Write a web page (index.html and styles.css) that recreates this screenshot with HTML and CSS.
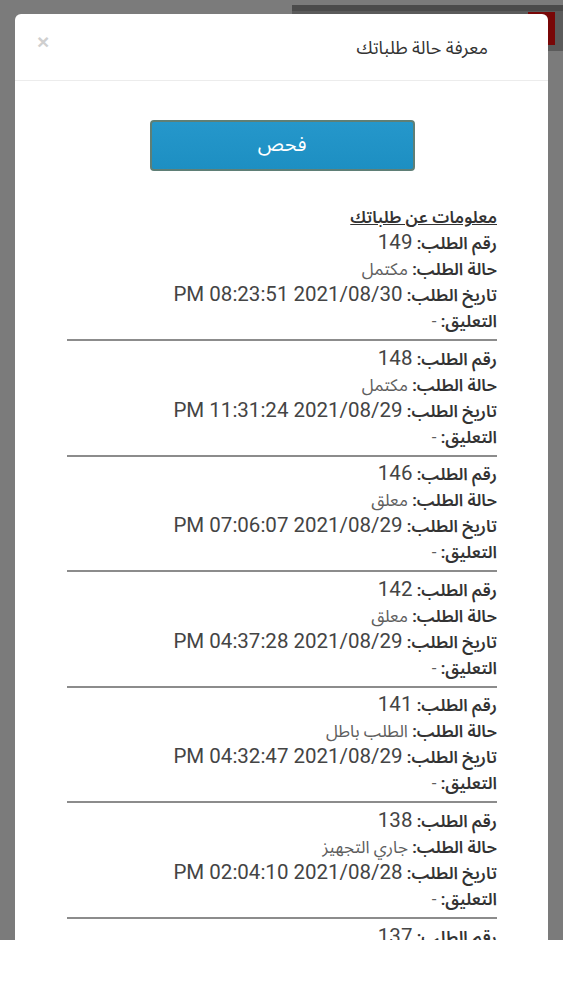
FILE: index.html
```html
<!DOCTYPE html>
<html lang="ar">
<head>
<meta charset="utf-8">
<title>معرفة حالة طلباتك</title>
<link rel="stylesheet" href="styles.css">
</head>
<body>
<div class="screen">
  <div class="bg-bar"></div>
  <div class="bg-red"></div>
  <div class="overlay"></div>
  <div class="modal">
    <div class="modal-header">
      <span class="close">×</span>
      <h4 class="modal-title">معرفة حالة طلباتك</h4>
    </div>
    <div class="modal-body">
      <div class="btn-wrap"><button class="btn">فحص</button></div>
      <div class="info">
        <div class="info-title">معلومات عن طلباتك</div>
        <div class="order">
          <div class="row"><span class="lbl">رقم الطلب:</span> <span class="num">149</span></div>
          <div class="row"><span class="lbl">حالة الطلب:</span> <span class="val">مكتمل</span></div>
          <div class="row"><span class="lbl">تاريخ الطلب:</span> <span class="num">2021/08/30 08:23:51 PM</span></div>
          <div class="row"><span class="lbl">التعليق:</span> <span class="val">-</span></div>
        </div>
        <hr class="sep">
        <div class="order">
          <div class="row"><span class="lbl">رقم الطلب:</span> <span class="num">148</span></div>
          <div class="row"><span class="lbl">حالة الطلب:</span> <span class="val">مكتمل</span></div>
          <div class="row"><span class="lbl">تاريخ الطلب:</span> <span class="num">2021/08/29 11:31:24 PM</span></div>
          <div class="row"><span class="lbl">التعليق:</span> <span class="val">-</span></div>
        </div>
        <hr class="sep">
        <div class="order">
          <div class="row"><span class="lbl">رقم الطلب:</span> <span class="num">146</span></div>
          <div class="row"><span class="lbl">حالة الطلب:</span> <span class="val">معلق</span></div>
          <div class="row"><span class="lbl">تاريخ الطلب:</span> <span class="num">2021/08/29 07:06:07 PM</span></div>
          <div class="row"><span class="lbl">التعليق:</span> <span class="val">-</span></div>
        </div>
        <hr class="sep">
        <div class="order">
          <div class="row"><span class="lbl">رقم الطلب:</span> <span class="num">142</span></div>
          <div class="row"><span class="lbl">حالة الطلب:</span> <span class="val">معلق</span></div>
          <div class="row"><span class="lbl">تاريخ الطلب:</span> <span class="num">2021/08/29 04:37:28 PM</span></div>
          <div class="row"><span class="lbl">التعليق:</span> <span class="val">-</span></div>
        </div>
        <hr class="sep">
        <div class="order">
          <div class="row"><span class="lbl">رقم الطلب:</span> <span class="num">141</span></div>
          <div class="row"><span class="lbl">حالة الطلب:</span> <span class="val">الطلب باطل</span></div>
          <div class="row"><span class="lbl">تاريخ الطلب:</span> <span class="num">2021/08/29 04:32:47 PM</span></div>
          <div class="row"><span class="lbl">التعليق:</span> <span class="val">-</span></div>
        </div>
        <hr class="sep">
        <div class="order">
          <div class="row"><span class="lbl">رقم الطلب:</span> <span class="num">138</span></div>
          <div class="row"><span class="lbl">حالة الطلب:</span> <span class="val">جاري التجهيز</span></div>
          <div class="row"><span class="lbl">تاريخ الطلب:</span> <span class="num">2021/08/28 02:04:10 PM</span></div>
          <div class="row"><span class="lbl">التعليق:</span> <span class="val">-</span></div>
        </div>
        <hr class="sep">
        <div class="order">
          <div class="row"><span class="lbl">رقم الطلب:</span> <span class="num">137</span></div>
          <div class="row"><span class="lbl">حالة الطلب:</span> <span class="val">مكتمل</span></div>
        </div>
      </div>
    </div>
  </div>
</div>
</body>
</html>
```
FILE: styles.css
```css
* { box-sizing: border-box; }
html, body { margin: 0; padding: 0; background: #ffffff; }
body {
  font-family: Roboto, "Noto Sans Arabic", "DejaVu Sans", sans-serif;
  color: #333;
}
.screen {
  position: relative;
  height: 940px;
  overflow: hidden;
  background: #f6f6f6;
  padding-top: 14px;
}
.bg-bar {
  position: absolute;
  left: 292px;
  top: 5px;
  width: 271px;
  height: 46px;
  background: #b6b6b6;
  border-top: 6px solid #969696;
}
.bg-red {
  position: absolute;
  left: 528px;
  top: 12px;
  width: 27px;
  height: 33px;
  background: #f20f0f;
}
.overlay {
  position: absolute;
  inset: 0;
  background: rgba(0, 0, 0, 0.5);
}
.modal {
  position: relative;
  margin: 0 15px;
  background: #fff;
  border-radius: 6px;
  min-height: 1000px;
  direction: rtl;
}
.modal-header {
  height: 67px;
  border-bottom: 1px solid #ececec;
  display: flex;
  align-items: flex-start;
  justify-content: space-between;
  padding: 0 60px 0 22px;
}
.modal-title {
  margin: 0;
  padding-top: 21px;
  font-size: 18px;
  font-weight: normal;
  color: #333;
  line-height: 25px;
}
.close {
  order: 2;
  font-size: 21px;
  font-weight: bold;
  color: #cfcfcf;
  line-height: 20px;
  padding-top: 18px;
  font-family: "Liberation Sans", sans-serif;
}
.modal-body {
  padding: 39px 51px 0 52px;
}
.btn-wrap {
  display: flex;
  justify-content: center;
}
.btn {
  width: 265px;
  height: 51px;
  background: linear-gradient(#2597cb, #1d8fc2);
  border: 2px solid #5f7f76;
  border-radius: 4px;
  color: #fff;
  font-family: inherit;
  font-size: 20px;
  padding: 0 0 1px;
}
.info {
  margin-top: 33px;
  font-size: 17px;
  line-height: 26px;
}
.info-title {
  text-decoration: underline;
  font-weight: 600;
  color: #333;
}
.row { white-space: nowrap; height: 26px; }
.lbl { font-weight: 600; color: #333; }
.val { color: #5e5e5e; }
.num { color: #444; font-size: 20.5px; line-height: 1; font-family: Roboto, sans-serif; }
.sep {
  margin: 5px 0 4.6px;
  border: 0;
  height: 2px;
  background: #8c8c8c;
}
```
